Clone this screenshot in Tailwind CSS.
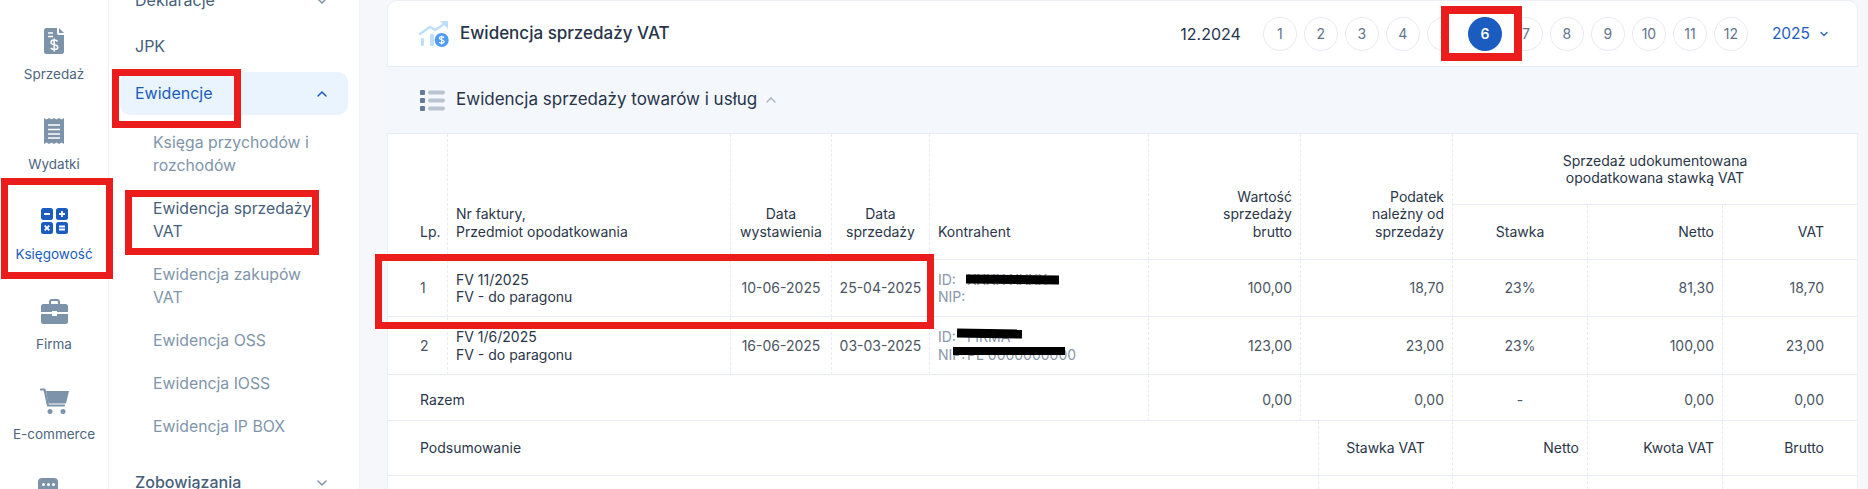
<!DOCTYPE html>
<html lang="pl">
<head>
  <meta charset="UTF-8" />
  <title>Ewidencja sprzedaży VAT</title>
  <script src="https://cdn.jsdelivr.net/npm/@tailwindcss/browser@4"></script>
</head>
<body class="bg-[#f5f7fa]">
  <div class="relative flex w-[1868px] h-[489px] overflow-hidden bg-[#f5f7fa] text-[14px] text-[#2b3648] [font-family:Inter,sans-serif]">

    <!-- main icon rail -->
    <aside class="w-[109px] shrink-0 h-full bg-white border-r border-[#eef1f6] pt-[9px] text-[13.500px] text-[#4c6580]">
      <div class="h-[90px] pt-[18px] flex flex-col items-center">
        <div class="h-[28px] flex items-center">
          <svg width="20" height="26" viewBox="0 0 20 26">
            <path d="M2.5 0H13v5.5a1.5 1.5 0 0 0 1.5 1.5H20v16.5a2.5 2.5 0 0 1-2.500 2.500h-15A2.500 2.500 0 0 1 0 23.500v-21A2.500 2.500 0 0 1 2.500 0z" fill="#7d93aa"/>
            <path d="M15 0l5 5h-5z" fill="#7d93aa"/>
            <path d="M4 5h5M4 8.500h5" stroke="#fff" stroke-width="1.600"/>
            <path d="M13.500 13.500c-.6-1-1.800-1.400-3.300-1.400-1.900 0-3.200.9-3.200 2.300 0 3.200 6.800 1.500 6.800 4.800 0 1.400-1.400 2.300-3.500 2.300-1.600 0-2.900-.6-3.500-1.700M10.200 10.500v13" fill="none" stroke="#fff" stroke-width="1.500"/>
          </svg>
        </div>
        <span class="mt-[9px] leading-[20px]">Sprzedaż</span>
      </div>
      <div class="h-[90px] pt-[18px] flex flex-col items-center">
        <div class="h-[28px] flex items-center">
          <svg width="20" height="26" viewBox="0 0 20 26">
            <path d="M0 0l2.500 1.500L5 0l2.500 1.500L10 0l2.500 1.500L15 0l2.500 1.500L20 0v26l-2.500-1.500L15 26l-2.500-1.500L10 26l-2.500-1.500L5 26l-2.500-1.500L0 26z" fill="#7d93aa"/>
            <path d="M4 7h12M4 11.500h12M4 16h12M4 20h12" stroke="#fff" stroke-width="1.600"/>
          </svg>
        </div>
        <span class="mt-[9px] leading-[20px]">Wydatki</span>
      </div>
      <div class="h-[90px] pt-[18px] flex flex-col items-center text-[#1a5cc0]">
        <div class="h-[28px] flex items-center">
          <svg width="27" height="26" viewBox="0 0 27 26">
            <rect x="0" y="0" width="12" height="12" rx="2.500" fill="#1a5cc0"/>
            <rect x="15" y="0" width="12" height="12" rx="2.500" fill="#1a5cc0"/>
            <rect x="0" y="14" width="12" height="12" rx="2.500" fill="#1a5cc0"/>
            <rect x="15" y="14" width="12" height="12" rx="2.500" fill="#1a5cc0"/>
            <path d="M3 6h6M18 6h6M21 3v6M3.700 17.700l4.600 4.600M8.300 17.700l-4.600 4.600M18 18.500h6M18 21.500h6" stroke="#fff" stroke-width="1.800"/>
          </svg>
        </div>
        <span class="mt-[9px] leading-[20px]">Księgowość</span>
      </div>
      <div class="h-[90px] pt-[18px] flex flex-col items-center">
        <div class="h-[28px] flex items-center">
          <svg width="27" height="25" viewBox="0 0 27 25">
            <path d="M9 6V3a2 2 0 0 1 2-2h5a2 2 0 0 1 2 2v3" fill="none" stroke="#7d93aa" stroke-width="2"/>
            <path d="M2.500 5h22A2.500 2.500 0 0 1 27 7.500V13H16v-1h-5v1H0V7.500A2.500 2.500 0 0 1 2.500 5z" fill="#7d93aa"/>
            <path d="M0 15h11v2h5v-2h11v7.500a2.500 2.500 0 0 1-2.500 2.500h-22A2.500 2.500 0 0 1 0 22.500z" fill="#7d93aa"/>
          </svg>
        </div>
        <span class="mt-[9px] leading-[20px]">Firma</span>
      </div>
      <div class="h-[90px] pt-[18px] flex flex-col items-center">
        <div class="h-[28px] flex items-center">
          <svg width="29" height="26" viewBox="0 0 29 26">
            <path d="M1 1.500h3.500l3.500 16h16" fill="none" stroke="#7d93aa" stroke-width="2.200" stroke-linecap="round" stroke-linejoin="round"/>
            <path d="M6 3h23l-3 12.500H8.500z" fill="#7d93aa"/>
            <circle cx="10" cy="23.500" r="2.500" fill="#7d93aa"/>
            <circle cx="23" cy="23.500" r="2.500" fill="#7d93aa"/>
          </svg>
        </div>
        <span class="mt-[9px] leading-[20px]">E-commerce</span>
      </div>
      <div class="h-[90px] pt-[19px] pl-[38px]">
        <div class="w-[20px] h-[20px] rounded-[4px] bg-[#7d93aa] flex items-start justify-center gap-[2px] pt-[5px]">
          <span class="w-[3px] h-[3px] bg-white rounded-full"></span>
          <span class="w-[3px] h-[3px] bg-white rounded-full"></span>
          <span class="w-[3px] h-[3px] bg-white rounded-full"></span>
        </div>
      </div>
    </aside>

    <!-- sub menu -->
    <nav class="w-[251px] shrink-0 h-[520px] bg-white border-r border-[#eef1f6] pl-[11px] pr-[11px] -mt-[22px] pt-[1px] text-[16px] leading-[23px]">
      <div class="flex items-center justify-between px-[15px] py-[10px] text-[#475f7b]">
        <span>Deklaracje</span>
        <svg width="12" height="8" viewBox="0 0 12 8" class="mr-[5px]"><path d="M2 2l4 4 4-4" fill="none" stroke="#7d93aa" stroke-width="1.500" stroke-linecap="round"/></svg>
      </div>
      <div class="mt-[3px] px-[15px] py-[10px] text-[#475f7b]">JPK</div>
      <div class="mt-[4px] flex items-center justify-between rounded-[10px] bg-[#e9f4fe] px-[15px] py-[10px] text-[#1a5cc0]">
        <span>Ewidencje</span>
        <svg width="12" height="8" viewBox="0 0 12 8" class="mr-[5px]"><path d="M2 6l4-4 4 4" fill="none" stroke="#1a5cc0" stroke-width="1.500" stroke-linecap="round"/></svg>
      </div>
      <div class="mt-[6px] pl-[33px] pr-[24px] text-[15.800px] text-[#8095aa]">
        <div class="py-[10px]">Księga przychodów i rozchodów</div>
        <div class="py-[10px] text-[#475f7b]">Ewidencja sprzedaży VAT</div>
        <div class="py-[10px]">Ewidencja zakupów VAT</div>
        <div class="py-[10px]">Ewidencja OSS</div>
        <div class="py-[10px]">Ewidencja IOSS</div>
        <div class="py-[10px]">Ewidencja IP BOX</div>
      </div>
      <div class="mt-[13px] flex items-center justify-between px-[15px] py-[10px] font-medium text-[#475f7b]">
        <span>Zobowiązania</span>
        <svg width="12" height="8" viewBox="0 0 12 8" class="mr-[5px]"><path d="M2 2l4 4 4-4" fill="none" stroke="#7d93aa" stroke-width="1.500" stroke-linecap="round"/></svg>
      </div>
    </nav>

    <!-- content -->
    <main class="flex-1 pl-[27px] pr-[10px]">
      <section class="h-[520px] bg-white border border-[#eceff5] rounded-t-[10px]">
        <header class="h-[65px] flex items-center pl-[31px] pr-[29px]">
          <svg width="30" height="26" viewBox="0 0 30 26">
            <path d="M1 13l10-7 5 3 10-6.500" fill="none" stroke="#bfdefc" stroke-width="2.500" stroke-linecap="round" stroke-linejoin="round"/>
            <path d="M21 0h8v8z" fill="#bfdefc"/>
            <rect x="2" y="17" width="3" height="8" rx="1" fill="#bfdefc"/>
            <rect x="11" y="13" width="4" height="12" rx="1" fill="#bfdefc"/>
            <circle cx="22.700" cy="19" r="7" fill="#4d9bf5"/>
            <path d="M25 16.800c-.4-.8-1.200-1.100-2.300-1.100-1.300 0-2.200.6-2.200 1.600 0 2.200 4.600 1 4.600 3.300 0 1-1 1.600-2.400 1.600-1.100 0-2-.4-2.400-1.200M22.700 14.500v9" fill="none" stroke="#fff" stroke-width="1.200"/>
          </svg>
          <h1 class="ml-[11px] text-[17px] font-medium text-[#27344a]">Ewidencja sprzedaży VAT</h1>
          <span class="ml-auto text-[16px] text-[#27344a]">12.2024</span>
          <div class="ml-[22px] flex gap-[7px] text-[14px] text-[#64748b]">
            <span class="w-[34px] h-[34px] rounded-full border border-[#e8ebf3] flex items-center justify-center">1</span>
            <span class="w-[34px] h-[34px] rounded-full border border-[#e8ebf3] flex items-center justify-center">2</span>
            <span class="w-[34px] h-[34px] rounded-full border border-[#e8ebf3] flex items-center justify-center">3</span>
            <span class="w-[34px] h-[34px] rounded-full border border-[#e8ebf3] flex items-center justify-center">4</span>
            <span class="w-[34px] h-[34px] rounded-full border border-[#e8ebf3] flex items-center justify-center">5</span>
            <span class="relative z-20 w-[34px] h-[34px] rounded-full bg-[#1a5cc0] text-white font-semibold flex items-center justify-center">6</span>
            <span class="w-[34px] h-[34px] rounded-full border border-[#e8ebf3] flex items-center justify-center">7</span>
            <span class="w-[34px] h-[34px] rounded-full border border-[#e8ebf3] flex items-center justify-center">8</span>
            <span class="w-[34px] h-[34px] rounded-full border border-[#e8ebf3] flex items-center justify-center">9</span>
            <span class="w-[34px] h-[34px] rounded-full border border-[#e8ebf3] flex items-center justify-center">10</span>
            <span class="w-[34px] h-[34px] rounded-full border border-[#e8ebf3] flex items-center justify-center">11</span>
            <span class="w-[34px] h-[34px] rounded-full border border-[#e8ebf3] flex items-center justify-center">12</span>
          </div>
          <span class="ml-[24px] text-[15.500px] text-[#1a5cc0]">2025</span>
          <svg width="8" height="6" viewBox="0 0 8 6" class="ml-[10px]"><path d="M1 1.500l3 3 3-3" fill="none" stroke="#1a5cc0" stroke-width="1.200" stroke-linecap="round"/></svg>
        </header>

        <div class="-mx-px h-[68px] flex items-center pl-[33px] bg-[#f4f7fb] border-y border-[#e7ebf5]">
          <svg width="25" height="21" viewBox="0 0 25 21">
            <rect y="0" width="5" height="5" rx="1" fill="#5f7a97"/>
            <rect y="8" width="5" height="5" rx="1" fill="#5f7a97"/>
            <rect y="16" width="5" height="5" rx="1" fill="#5f7a97"/>
            <rect x="8" y="0.500" width="17" height="4" rx="2" fill="#b8c4d0"/>
            <rect x="8" y="8.500" width="17" height="4" rx="2" fill="#b8c4d0"/>
            <rect x="8" y="16.500" width="17" height="4" rx="2" fill="#b8c4d0"/>
          </svg>
          <span class="ml-[11px] text-[17px] text-[#27344a]">Ewidencja sprzedaży towarów i usług</span>
          <svg width="12" height="8" viewBox="0 0 12 8" class="ml-[8px]"><path d="M2 6l4-4 4 4" fill="none" stroke="#a3b1c0" stroke-width="1.300" stroke-linecap="round"/></svg>
        </div>

        <table class="w-full table-fixed border-separate border-spacing-0 leading-[17.500px]">
          <colgroup>
            <col class="w-[60px]" /><col class="w-[283px]" /><col class="w-[101px]" /><col class="w-[98px]" /><col class="w-[219px]" />
            <col class="w-[152px]" /><col class="w-[152px]" /><col class="w-[135px]" /><col class="w-[135px]" /><col />
          </colgroup>
          <thead class="font-normal">
            <tr class="h-[71px]">
              <th rowspan="2" class="font-normal align-bottom text-left pl-[32px] pb-[19px] border-b border-r [border-right-style:dashed] border-[#e8ebf3]">Lp.</th>
              <th rowspan="2" class="font-normal align-bottom text-left pl-[8px] pb-[19px] border-b border-r [border-right-style:dashed] border-[#e8ebf3]">Nr faktury,<br />Przedmiot opodatkowania</th>
              <th rowspan="2" class="font-normal align-bottom text-center pb-[19px] border-b border-r [border-right-style:dashed] border-[#e8ebf3]">Data<br />wystawienia</th>
              <th rowspan="2" class="font-normal align-bottom text-center pb-[19px] border-b border-r [border-right-style:dashed] border-[#e8ebf3]">Data<br />sprzedaży</th>
              <th rowspan="2" class="font-normal align-bottom text-left pl-[8px] pb-[19px] border-b border-r [border-right-style:dashed] border-[#e8ebf3]">Kontrahent</th>
              <th rowspan="2" class="font-normal align-bottom text-right pr-[8px] pb-[19px] border-b border-r [border-right-style:dashed] border-[#e8ebf3]">Wartość<br />sprzedaży<br />brutto</th>
              <th rowspan="2" class="font-normal align-bottom text-right pr-[8px] pb-[19px] border-b border-r [border-right-style:dashed] border-[#e8ebf3]">Podatek<br />należny od<br />sprzedaży</th>
              <th colspan="3" class="font-normal text-center border-b border-[#e8ebf3]">Sprzedaż udokumentowana<br />opodatkowana stawką VAT</th>
            </tr>
            <tr class="h-[55px]">
              <th class="font-normal text-center border-b border-r [border-right-style:dashed] border-[#e8ebf3]">Stawka</th>
              <th class="font-normal text-right pr-[8px] border-b border-r [border-right-style:dashed] border-[#e8ebf3]">Netto</th>
              <th class="font-normal text-right pr-[33px] border-b border-[#e8ebf3]">VAT</th>
            </tr>
          </thead>
          <tbody class="text-[#4b5563]">
            <tr class="h-[57px]">
              <td class="pl-[32px] border-b border-r [border-right-style:dashed] border-[#e8ebf3]">1</td>
              <td class="pl-[8px] text-[#2b3648] border-b border-r [border-right-style:dashed] border-[#e8ebf3]">FV 11/2025<br />FV - do paragonu</td>
              <td class="text-center border-b border-r [border-right-style:dashed] border-[#e8ebf3]">10-06-2025</td>
              <td class="text-center border-b border-r [border-right-style:dashed] border-[#e8ebf3]">25-04-2025</td>
              <td class="pl-[8px] text-[#8a97a8] border-b border-r [border-right-style:dashed] border-[#e8ebf3]"><span class="inline-block w-[29px]">ID:</span>XXXX XXXX<br />NIP:</td>
              <td class="text-right pr-[8px] border-b border-r [border-right-style:dashed] border-[#e8ebf3]">100,00</td>
              <td class="text-right pr-[8px] border-b border-r [border-right-style:dashed] border-[#e8ebf3]">18,70</td>
              <td class="text-center border-b border-r [border-right-style:dashed] border-[#e8ebf3]">23%</td>
              <td class="text-right pr-[8px] border-b border-r [border-right-style:dashed] border-[#e8ebf3]">81,30</td>
              <td class="text-right pr-[33px] border-b border-[#e8ebf3]">18,70</td>
            </tr>
            <tr class="h-[58px]">
              <td class="pl-[32px] border-b border-r [border-right-style:dashed] border-[#e8ebf3]">2</td>
              <td class="pl-[8px] text-[#2b3648] border-b border-r [border-right-style:dashed] border-[#e8ebf3]">FV 1/6/2025<br />FV - do paragonu</td>
              <td class="text-center border-b border-r [border-right-style:dashed] border-[#e8ebf3]">16-06-2025</td>
              <td class="text-center border-b border-r [border-right-style:dashed] border-[#e8ebf3]">03-03-2025</td>
              <td class="pl-[8px] text-[#8a97a8] border-b border-r [border-right-style:dashed] border-[#e8ebf3]"><span class="inline-block w-[29px]">ID:</span>FIRMA<br /><span class="inline-block w-[29px]">NIP:</span>PL 0000000000</td>
              <td class="text-right pr-[8px] border-b border-r [border-right-style:dashed] border-[#e8ebf3]">123,00</td>
              <td class="text-right pr-[8px] border-b border-r [border-right-style:dashed] border-[#e8ebf3]">23,00</td>
              <td class="text-center border-b border-r [border-right-style:dashed] border-[#e8ebf3]">23%</td>
              <td class="text-right pr-[8px] border-b border-r [border-right-style:dashed] border-[#e8ebf3]">100,00</td>
              <td class="text-right pr-[33px] border-b border-[#e8ebf3]">23,00</td>
            </tr>
            <tr class="h-[46px]">
              <td colspan="5" class="pl-[32px] pt-[5px] text-[#2b3648] border-b border-r [border-right-style:dashed] border-[#e8ebf3]">Razem</td>
              <td class="text-right pr-[8px] pt-[5px] border-b border-r [border-right-style:dashed] border-[#e8ebf3]">0,00</td>
              <td class="text-right pr-[8px] pt-[5px] border-b border-r [border-right-style:dashed] border-[#e8ebf3]">0,00</td>
              <td class="text-center pt-[5px] border-b border-r [border-right-style:dashed] border-[#e8ebf3]">-</td>
              <td class="text-right pr-[8px] pt-[5px] border-b border-r [border-right-style:dashed] border-[#e8ebf3]">0,00</td>
              <td class="text-right pr-[33px] pt-[5px] border-b border-[#e8ebf3]">0,00</td>
            </tr>
          </tbody>
        </table>

        <table class="w-full table-fixed border-separate border-spacing-0 leading-[17.500px]">
          <colgroup><col class="w-[931px]" /><col class="w-[134px]" /><col class="w-[135px]" /><col class="w-[135px]" /><col /></colgroup>
          <tbody>
            <tr class="h-[55px]">
              <td class="pl-[32px] border-b border-r [border-right-style:dashed] border-[#e8ebf3]">Podsumowanie</td>
              <td class="text-center border-b border-r [border-right-style:dashed] border-[#e8ebf3]">Stawka VAT</td>
              <td class="text-right pr-[8px] border-b border-r [border-right-style:dashed] border-[#e8ebf3]">Netto</td>
              <td class="text-right pr-[8px] border-b border-r [border-right-style:dashed] border-[#e8ebf3]">Kwota VAT</td>
              <td class="text-right pr-[33px] border-b border-[#e8ebf3]">Brutto</td>
            </tr>
            <tr class="h-[40px]">
              <td class="border-r [border-right-style:dashed] border-[#e8ebf3]"></td>
              <td class="border-r [border-right-style:dashed] border-[#e8ebf3]"></td>
              <td class="border-r [border-right-style:dashed] border-[#e8ebf3]"></td>
              <td class="border-r [border-right-style:dashed] border-[#e8ebf3]"></td>
              <td></td>
            </tr>
          </tbody>
        </table>
      </section>
    </main>

    <!-- red markers and black scribbles drawn over the screenshot -->
    <div class="absolute left-[1px] top-[178px] w-[112px] h-[101px] border-[7px] border-[#ea1c1c]"></div>
    <div class="absolute left-[112px] top-[69px] w-[129px] h-[59px] border-[7px] border-[#ea1c1c]"></div>
    <div class="absolute left-[125px] top-[190px] w-[194px] h-[65px] border-[7px] border-[#ea1c1c]"></div>
    <div class="absolute left-[375px] top-[254px] w-[559px] h-[75px] border-[7px] border-[#ea1c1c]"></div>
    <div class="absolute z-10 left-[1441px] top-[6px] w-[81px] h-[55px] bg-white border-[8px] border-[#ea1c1c]"></div>
    <div class="absolute left-[966px] top-[275px] w-[93px] h-[9px] bg-black rotate-[0.5deg]"></div>
    <div class="absolute left-[957px] top-[329px] w-[65px] h-[9px] bg-black rotate-[1deg]"></div>
    <div class="absolute left-[953px] top-[347px] w-[112px] h-[8px] bg-black"></div>
  </div>
</body>
</html>
